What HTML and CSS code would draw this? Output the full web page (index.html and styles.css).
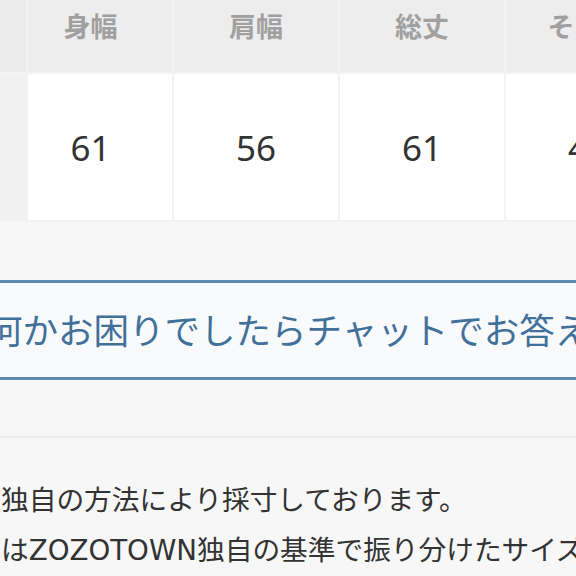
FILE: index.html
```html
<!DOCTYPE html>
<html lang="ja">
<head>
    <meta charset="UTF-8">
    <meta name="viewport" content="width=device-width, initial-scale=1.0">
    <title>サイズ表</title>
    <link rel="stylesheet" href="styles.css">
</head>
<body>

    <!-- Size Table -->
    <div class="table-wrap">
        <div class="size-table">
            <div class="cell head side"></div>
            <div class="cell head first">身幅</div>
            <div class="cell head">肩幅</div>
            <div class="cell head">総丈</div>
            <div class="cell head">そで丈</div>

            <div class="cell side"></div>
            <div class="cell value first">61</div>
            <div class="cell value">56</div>
            <div class="cell value">61</div>
            <div class="cell value">47</div>
        </div>
    </div>

    <!-- Chat Button -->
    <div class="chat-btn">何かお困りでしたらチャットでお答えします</div>

    <hr class="divider">

    <!-- Notes -->
    <div class="notes">
        <p>独自の方法により採寸しております。</p>
        <p>はZOZOTOWN独自の基準で振り分けたサイズです。</p>
    </div>

</body>
</html>
```

FILE: styles.css
```css
* {
    margin: 0;
    padding: 0;
    box-sizing: border-box;
}

body {
    font-family: "Noto Sans CJK JP", "Noto Sans", sans-serif;
    background-color: #f7f7f7;
    width: 576px;
    height: 576px;
    overflow: hidden;
}

/* Size Table */
.table-wrap {
    overflow: hidden;
}

.size-table {
    display: grid;
    grid-template-columns: 26px 144px 164px 164px 164px;
    grid-template-rows: 72px 146px;
    gap: 2px;
    width: max-content;
    background-color: #f3f3f3;
    padding-bottom: 2px;
}

.cell {
    display: flex;
    align-items: center;
    justify-content: center;
    background-color: #ffffff;
}

.cell.head {
    background-color: #ededed;
    color: #a0a0a0;
    font-size: 27px;
    font-weight: 700;
    padding-bottom: 22px;
}

.cell.side {
    background-color: #f1f1f1;
}

.cell.head.side {
    background-color: #ececec;
}

.cell.first {
    padding-right: 19px;
}

.cell.value {
    color: #333333;
    font-size: 35px;
    font-family: "Noto Sans", sans-serif;
}

/* Chat Button */
.chat-btn {
    margin: 58px -30px 0;
    height: 100px;
    padding-left: 14px;
    border: 3px solid #5c8cb2;
    background-color: #f9fafb;
    color: #41709a;
    font-size: 35.5px;
    line-height: 92px;
    white-space: nowrap;
    overflow: hidden;
}

.divider {
    border: none;
    height: 2px;
    background-color: #ececec;
    margin-top: 56px;
}

/* Notes */
.notes {
    padding-top: 38px;
    padding-left: 1px;
    color: #333333;
    font-family: "DejaVu Sans", "Noto Sans CJK JP", sans-serif;
    font-size: 27.7px;
    line-height: 50px;
    white-space: nowrap;
}
```
